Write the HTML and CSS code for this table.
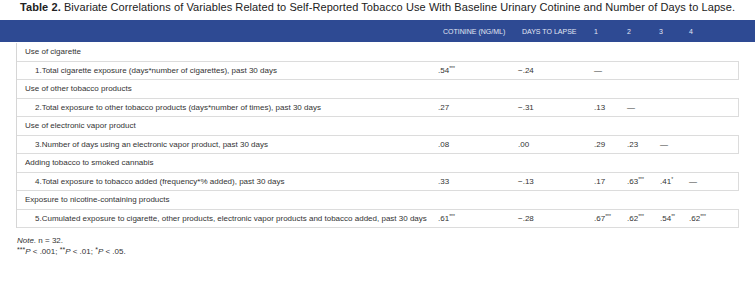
FILE: index.html
```html
<!DOCTYPE html>
<html>
<head>
<meta charset="utf-8">
<link rel="stylesheet" href="styles.css">
</head>
<body>
<p class="caption"><b>Table 2.</b> Bivariate Correlations of Variables Related to Self-Reported Tobacco Use With Baseline Urinary Cotinine and Number of Days to Lapse.</p>
<div class="thead">
  <span></span><span>COTININE (NG/ML)</span><span>DAYS TO LAPSE</span><span>1</span><span>2</span><span>3</span><span>4</span>
</div>
<div class="tbody">
  <div class="cat">Use of cigarette</div>
  <div class="row"><span class="label">1.Total cigarette exposure (days*number of cigarettes), past 30 days</span><span>.54<sup>***</sup></span><span>−.24</span><span>—</span><span></span><span></span><span></span></div>
  <div class="cat">Use of other tobacco products</div>
  <div class="row"><span class="label">2.Total exposure to other tobacco products (days*number of times), past 30 days</span><span>.27</span><span>−.31</span><span>.13</span><span>—</span><span></span><span></span></div>
  <div class="cat">Use of electronic vapor product</div>
  <div class="row"><span class="label">3.Number of days using an electronic vapor product, past 30 days</span><span>.08</span><span>.00</span><span>.29</span><span>.23</span><span>—</span><span></span></div>
  <div class="cat">Adding tobacco to smoked cannabis</div>
  <div class="row"><span class="label">4.Total exposure to tobacco added (frequency*% added), past 30 days</span><span>.33</span><span>−.13</span><span>.17</span><span>.63<sup>***</sup></span><span>.41<sup>*</sup></span><span>—</span></div>
  <div class="cat">Exposure to nicotine-containing products</div>
  <div class="row"><span class="label">5.Cumulated exposure to cigarette, other products, electronic vapor products and tobacco added, past 30 days</span><span>.61<sup>***</sup></span><span>−.28</span><span>.67<sup>***</sup></span><span>.62<sup>***</sup></span><span>.54<sup>**</sup></span><span>.62<sup>***</sup></span></div>
</div>
<div class="notes">
  <p><i>Note.</i> n = 32.</p>
  <p><sup>***</sup><i>P</i> &lt; .001; <sup>**</sup><i>P</i> &lt; .01; <sup>*</sup><i>P</i> &lt; .05.</p>
</div>
</body>
</html>
```
FILE: styles.css
```css
html, body {
  margin: 0;
  padding: 0;
  background: #fff;
}
body {
  font-family: "Liberation Sans", Arial, sans-serif;
  color: #333;
  width: 755px;
}
.caption {
  margin: 0;
  padding: 1px 0 0 20px;
  height: 20px;
  box-sizing: border-box;
  font-size: 11px;
  line-height: 13px;
  letter-spacing: 0.08px;
  color: #222;
  white-space: nowrap;
}
.thead {
  height: 22px;
  background: #2e4a93;
  color: #e2e7f3;
  font-size: 7px;
  display: grid;
  grid-template-columns: 443px 79px 72px 33px 32px 30px 1fr;
  align-items: center;
}
.thead span {
  white-space: nowrap;
}
.tbody {
  margin-top: 1px;
  margin-left: 16px;
  width: 722px;
  border-left: 1px solid #d6d6d6;
  font-size: 8px;
}
.cat {
  height: 18px;
  line-height: 18px;
  padding-left: 8px;
  white-space: nowrap;
}
.row {
  height: 19px;
  box-sizing: border-box;
  border-top: 1px solid #dcdcdc;
  border-bottom: 1px solid #dcdcdc;
  border-right: 1px solid #dcdcdc;
  display: grid;
  grid-template-columns: 421px 80px 76px 33px 33px 29px 1fr;
  align-items: center;
  white-space: nowrap;
}
.row .label {
  padding-left: 18px;
}
sup {
  font-size: 5px;
  vertical-align: 3px;
  line-height: 0;
}
.notes {
  padding-left: 17px;
  margin-top: 7px;
  font-size: 8px;
  line-height: 11px;
  color: #333;
}
.notes sup {
  font-size: 7px;
  vertical-align: 2px;
}
.notes p {
  margin: 0;
}
```
